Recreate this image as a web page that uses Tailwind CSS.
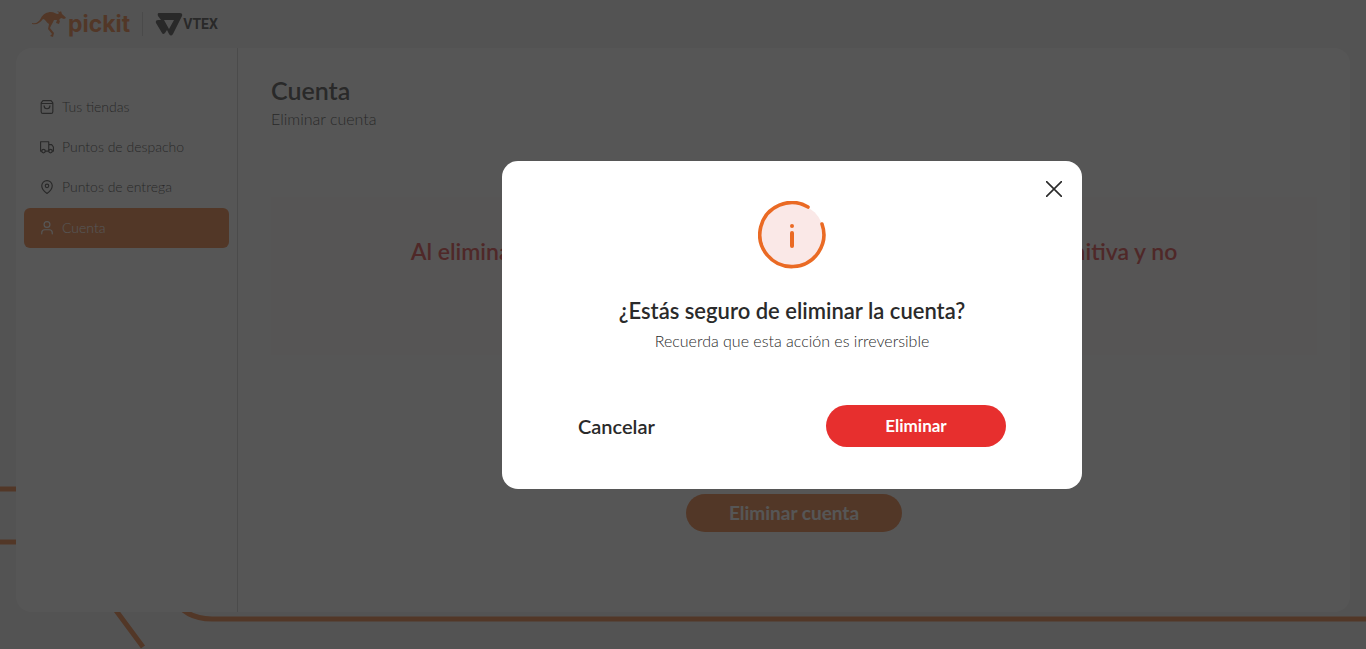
<!DOCTYPE html>
<html lang="es">

<head>
    <meta charset="UTF-8">
    <meta name="viewport" content="width=device-width, initial-scale=1.0">
    <script src="https://cdn.jsdelivr.net/npm/@tailwindcss/browser@4"></script>
    <title>Cuenta</title>
</head>

<body class="font-[Lato,'Open_Sans',sans-serif] text-[#2a2a2a]">
    <div class="relative flex h-screen flex-col overflow-hidden bg-[#f2f2f2]">
        <!-- Background lines -->
        <svg class="absolute bottom-0 left-0 h-[169px] w-full" fill="none" stroke="#e96d25" stroke-width="5">
            <path d="M0 9H40" />
            <path d="M0 62H60Q76 62 89 94L143 167" />
            <path d="M150 80L172 116Q184 139 212 139H4000" />
        </svg>

        <!-- Header -->
        <header class="relative flex h-12 shrink-0 items-center px-8">
            <a href="#" class="flex items-center text-[#e96d25]" aria-label="pickit">
                <svg class="h-7 w-9" viewBox="0 0 36 28" fill="currentColor">
                    <path d="M0 13C4 14 7 12 9 8C11 4 15 2 19 2C22 2 24 4 26 4L27 3L25 1L28 2L29 1L30 4C31 5 33 6 34 8L32 9L29 8L27 10L28 11L27 14L24 13L25 10L22 10C21 13 19 15 18 18L22 23L21 27L18 26L20 24L16 19L17 14C14 12 13 9 11 9C8 13 5 15 0 14Z" />
                </svg>
                <span class="font-[Inter,sans-serif] text-[23px] font-bold">pickit</span>
            </a>
            <span class="mx-3 h-6 w-px bg-[#c4c4c4]"></span>
            <a href="#" class="flex items-center" aria-label="VTEX">
                <svg class="h-6 w-7" viewBox="0 0 28 24" fill="currentColor">
                    <path fill-rule="evenodd" d="M4 1H25Q28 1 27 4L18 22Q16 25 14 22L12 18L10 21Q8 23 7 21L1 11Q0 8 3 8H6L3 4Q2 1 4 1ZM9 8L14 17L19 8Z" />
                </svg>
                <span class="font-[Roboto,sans-serif] text-sm font-bold">VTEX</span>
            </a>
        </header>

        <div class="relative mx-4 mb-[37px] flex flex-1 rounded-2xl bg-white">
            <!-- Sidebar -->
            <nav class="w-[222px] shrink-0 border-r border-[#ccc] px-2 pt-[39px] text-sm font-light">
                <a href="#" class="flex h-10 items-center gap-2 px-4">
                    <svg class="size-[14px]" viewBox="0 0 24 24" fill="none" stroke="currentColor" stroke-width="2" stroke-linecap="round" stroke-linejoin="round">
                        <path d="M5 1H19L22 5V20Q22 23 19 23H5Q2 23 2 20V5ZM2 6H22M7 10Q7 15 12 15T17 10" />
                    </svg>
                    Tus tiendas
                </a>
                <a href="#" class="flex h-10 items-center gap-2 px-4">
                    <svg class="size-[14px]" viewBox="0 0 24 24" fill="none" stroke="currentColor" stroke-width="2" stroke-linecap="round" stroke-linejoin="round">
                        <path d="M3 19H1V3H15V19H9M15 8H20L23 12V19H21" />
                        <circle cx="6" cy="19" r="3" />
                        <circle cx="18" cy="19" r="3" />
                    </svg>
                    Puntos de despacho
                </a>
                <a href="#" class="flex h-10 items-center gap-2 px-4">
                    <svg class="size-[14px]" viewBox="0 0 24 24" fill="none" stroke="currentColor" stroke-width="2" stroke-linecap="round" stroke-linejoin="round">
                        <path d="M21 10C21 17 12 23 12 23S3 17 3 10A9 9 0 0 1 21 10Z" />
                        <circle cx="12" cy="10" r="3" />
                    </svg>
                    Puntos de entrega
                </a>
                <a href="#" class="mt-px flex h-10 items-center gap-2 rounded-md bg-[#e96d25] px-4 text-white">
                    <svg class="size-[14px]" viewBox="0 0 24 24" fill="none" stroke="currentColor" stroke-width="2" stroke-linecap="round" stroke-linejoin="round">
                        <path d="M3 22V20Q3 15 8 15H16Q21 15 21 20V22" />
                        <circle cx="12" cy="6" r="5" />
                    </svg>
                    Cuenta
                </a>
            </nav>

            <!-- Content -->
            <main class="flex flex-1 flex-col px-[33px] pt-6">
                <h1 class="text-[25px] leading-9 font-semibold">Cuenta</h1>
                <p class="text-base leading-[22px] font-light">Eliminar cuenta</p>
                <div class="mt-[67px] flex h-[158px] justify-center bg-[#fff8f8] px-32 pt-[38px]">
                    <p class="text-center text-[23px] leading-8 font-semibold text-[#dc2626]">
                        Al eliminar tu cuenta en VTEX, la acción se realizará de forma definitiva y no
                        podrás recuperarla
                    </p>
                </div>
                <button type="button" class="mx-auto mt-auto mb-20 h-[38px] w-[216px] rounded-full bg-[#e96d25] text-[19px] font-bold text-white">Eliminar cuenta</button>
            </main>
        </div>
    </div>

    <!-- Modal -->
    <div class="fixed inset-0 flex items-center justify-center bg-[#282828]/79 pl-[218px]">
        <div role="dialog" aria-modal="true" aria-labelledby="modal_title" class="relative w-[580px] rounded-2xl bg-white px-[76px] pt-10 pb-[42px] text-center">
            <button type="button" aria-label="Cerrar" class="absolute top-5 right-5">
                <svg class="size-4" viewBox="0 0 16 16" fill="none" stroke="#2a2a2a" stroke-width="1.6">
                    <path d="M0 0L16 16M16 0L0 16" />
                </svg>
            </button>
            <svg class="mx-auto size-[68px]" viewBox="0 0 68 68" fill="none" stroke="#ea6a24" stroke-width="3.6" stroke-linecap="round">
                <circle cx="34" cy="34" r="32" fill="#fae8e7" stroke="none" />
                <path d="M50 6A32 32 0 1 0 64 23" />
                <path d="M34 32V45" stroke-width="4" />
                <circle cx="34" cy="25" r="2" fill="#ea6a24" stroke="none" />
            </svg>
            <h2 id="modal_title" class="mt-6 text-[22px] leading-9 font-semibold">¿Estás seguro de eliminar la cuenta?</h2>
            <p class="text-base font-light">Recuerda que esta acción es irreversible</p>
            <div class="mt-[52px] flex items-center justify-between">
                <button type="button" class="text-xl font-semibold">Cancelar</button>
                <button type="button" class="h-[42px] w-[180px] rounded-full bg-[#e72f2e] text-[17px] font-bold text-white">Eliminar</button>
            </div>
        </div>
    </div>
</body>

</html>
